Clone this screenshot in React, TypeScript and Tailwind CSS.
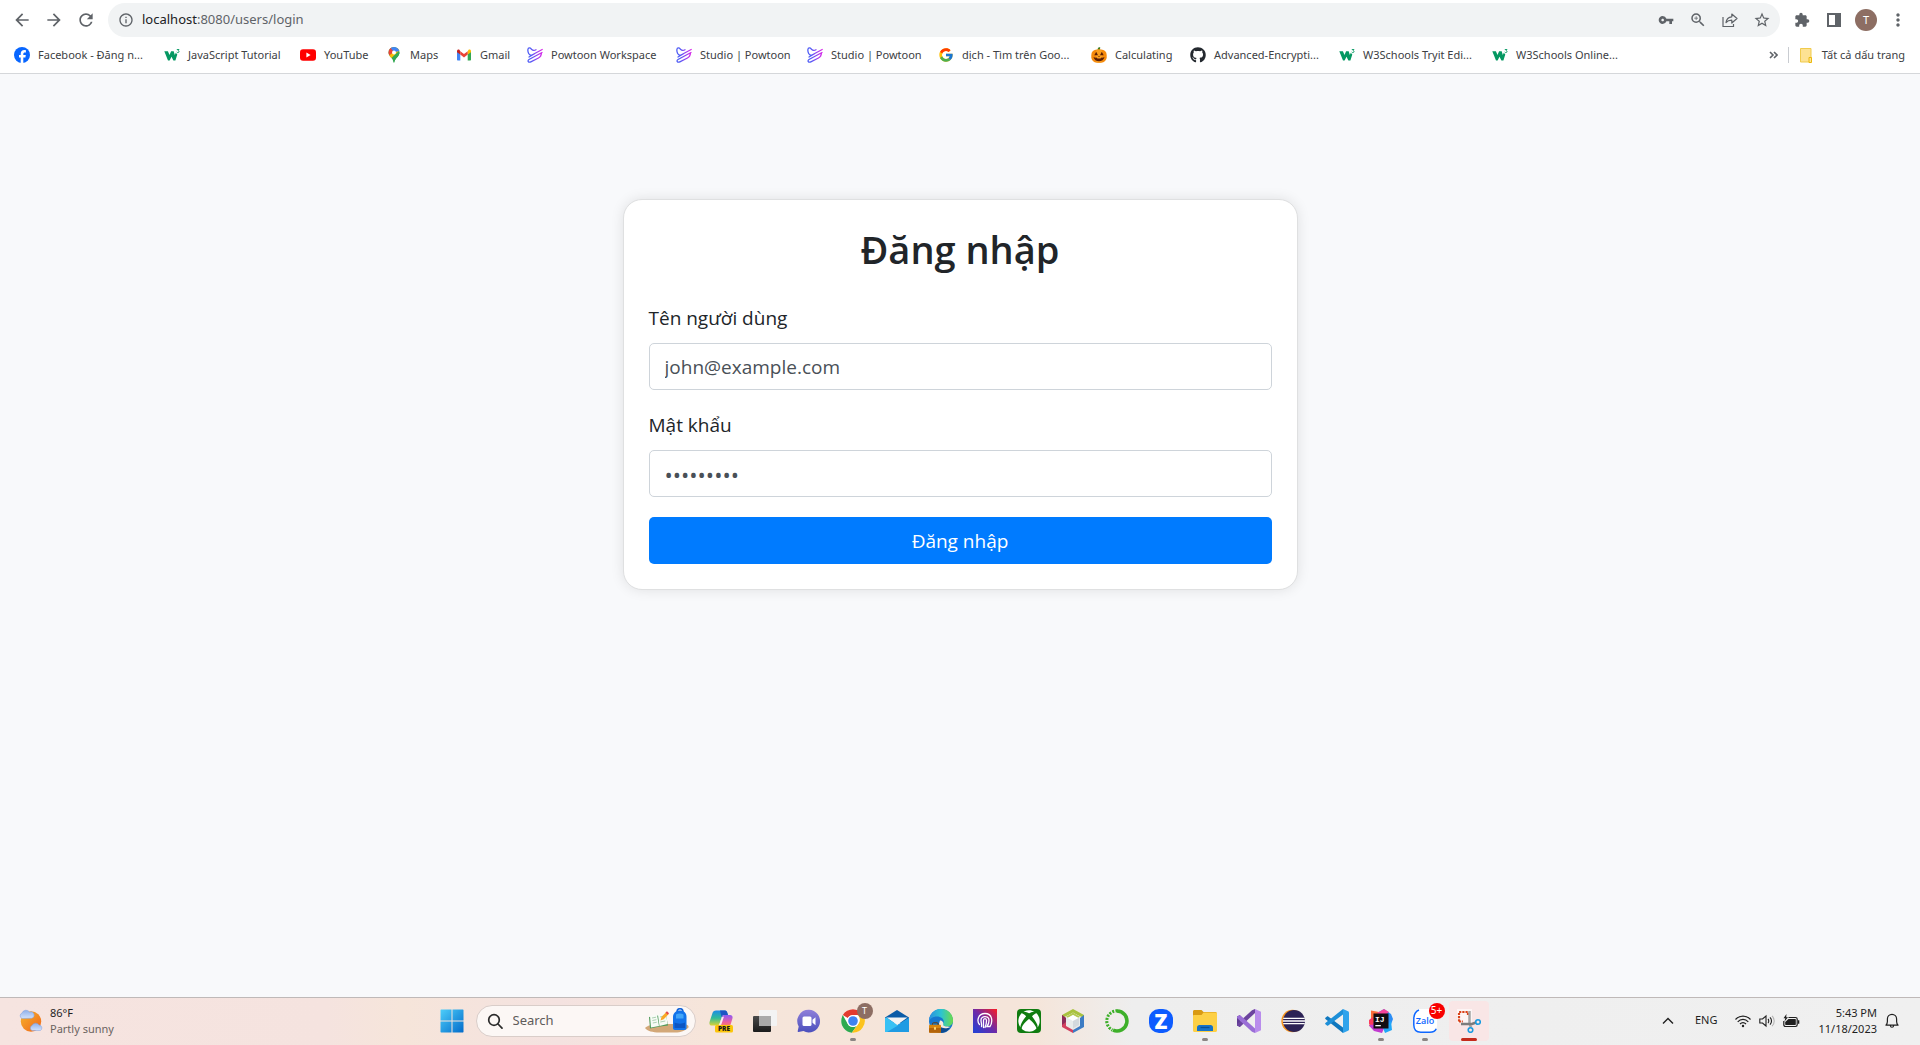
import React from 'react';
import {
  MdArrowBack,
  MdArrowForward,
  MdRefresh,
  MdInfoOutline,
  MdVpnKey,
  MdZoomIn,
  MdStarBorder,
  MdExtension,
  MdMoreVert,
} from 'react-icons/md';
import { FcGoogle } from 'react-icons/fc';
import { FaGithub, FaXbox } from 'react-icons/fa';

/* ---------- Bookmark icons ---------- */

const Facebook = () => (
  <svg viewBox="0 0 16 16" className="size-4">
    <circle cx="8" cy="8" r="8" fill="#0866ff" />
    <path d="M6.700 15.900V10.500H5V8.100h1.700V7c0-2.700 1.200-3.900 3.800-3.900.5 0 1.100.1 1.400.2v2.200h-1c-1.100 0-1.600.5-1.600 1.600v1h2.500l-.4 2.400H9.300v5.400A8 8 0 0 1 6.700 15.900z" fill="#fff" />
  </svg>
);

const W3 = () => (
  <svg viewBox="0 0 16 16" className="size-4">
    <path d="M.3 4.300h3.600l1.600 3.700 1.600-3.700h2.600l1.100 3.700 1-2.200 1.500 1.700-1.900 6h-2L7.500 9.800l-1.900 3.700H4z" fill="#059862" />
    <path d="M12.800 2.500h2.200l-1 1.200c1.400 0 1.300 1.900-.1 1.900-.6 0-1-.2-1.200-.6" fill="none" stroke="#059862" strokeWidth=".9" />
  </svg>
);

const YouTube = () => (
  <svg viewBox="0 0 16 16" className="size-4">
    <rect x="0" y="2.300" width="16" height="11.400" rx="3" fill="#f00" />
    <path d="M6.400 5.600v4.800L10.600 8z" fill="#fff" />
  </svg>
);

const Maps = () => (
  <svg viewBox="0 0 16 16" className="size-4">
    <defs>
      <clipPath id="pin">
        <path d="M8 0a5.500 5.500 0 0 0-5.500 5.500C2.500 9.500 6.700 10.500 8 16c1.300-5.500 5.500-6.500 5.500-10.500A5.500 5.500 0 0 0 8 0z" />
      </clipPath>
    </defs>
    <g clipPath="url(#pin)">
      <rect width="16" height="16" fill="#34a853" />
      <path d="M0 12 10 1l6 0L8 8.500 4.500 12z" fill="#fbbc04" />
      <path d="M0 0h6L8 5 2 9z" fill="#ea4335" />
      <path d="M4 0h12v3L8 5.500z" fill="#4285f4" />
      <path d="M16 3 7 12v4h9z" fill="#34a853" />
    </g>
    <circle cx="8" cy="5.500" r="2" fill="#fff" />
  </svg>
);

const Gmail = () => (
  <svg viewBox="0 0 16 16" className="size-4">
    <path d="M1 4.300v8.100c0 .6.400 1 1 1h2.300V7z" fill="#4285f4" />
    <path d="M15 4.300v8.100c0 .6-.4 1-1 1h-2.300V7z" fill="#34a853" />
    <path d="M11.700 4.200V7.600L15 5.200V4c0-1.400-1.500-2-2.400-1.200z" fill="#fbbc04" />
    <path d="M1 5.200l3.300 2.400V4.200L3.400 2.800C2.500 2 1 2.600 1 4z" fill="#c5221f" />
    <path d="M4.300 4.200 8 7l3.700-2.800v3.400L8 10.400 4.300 7.600z" fill="#ea4335" />
  </svg>
);

const Powtoon = () => (
  <svg viewBox="0 0 16 16" className="size-4">
    <defs>
      <linearGradient id="pow" x1="0" x2="16" y1="0" y2="0" gradientUnits="userSpaceOnUse">
        <stop offset=".25" stopColor="#4f5bf5" />
        <stop offset="1" stopColor="#e425e8" />
      </linearGradient>
    </defs>
    <path
      d="M15.200 2.500 4.500 8.200C2 8.800.6 5 .9 2.500 1.200.500 3 .5 4.500 2.200 6 3.700 7.500 3.500 9 2.700M15 5.500 2 12.500C0 13.800 1.500 16 3.800 14.800L11.500 11C13.500 10 14.300 8.500 14.500 6M7.500 6.800 2 10"
      fill="none"
      stroke="url(#pow)"
      strokeWidth="1.300"
      strokeLinecap="round"
    />
  </svg>
);

const Pumpkin = () => (
  <svg viewBox="0 0 16 16" className="size-4">
    <path d="M6.500 3.500 7 .800l2.200-.8L9 3.500z" fill="#3f7d20" />
    <rect x=".3" y="2.500" width="15.400" height="13.200" rx="5.500" fill="#f58a0c" />
    <rect x="4.800" y="2.500" width="6.400" height="13.200" rx="3" fill="#fb9e1e" />
    <path d="M3.300 8.300 5.200 4.800 7 8.300zM9 8.300l1.800-3.500 1.900 3.500zM7.200 9.900 8 8.700l.8 1.200zM2.500 10l1.800.8 1.200-.3 1 .9h3l1-.9 1.200.3 1.800-.8c-.6 2.800-2.800 4.300-5.500 4.300S3.100 12.800 2.500 10z" fill="#5b1f06" />
  </svg>
);

type Bookmark = { label: string; icon: React.ReactNode; width: string };

const bookmarks: Bookmark[] = [
  { label: 'Facebook - Đăng n...', icon: <Facebook />, width: 'w-[150px]' },
  { label: 'JavaScript Tutorial', icon: <W3 />, width: 'w-[136px]' },
  { label: 'YouTube', icon: <YouTube />, width: 'w-[86px]' },
  { label: 'Maps', icon: <Maps />, width: 'w-[70px]' },
  { label: 'Gmail', icon: <Gmail />, width: 'w-[71px]' },
  { label: 'Powtoon Workspace', icon: <Powtoon />, width: 'w-[149px]' },
  { label: 'Studio | Powtoon', icon: <Powtoon />, width: 'w-[131px]' },
  { label: 'Studio | Powtoon', icon: <Powtoon />, width: 'w-[131px]' },
  { label: 'dịch - Tìm trên Goo...', icon: <FcGoogle className="size-4" />, width: 'w-[153px]' },
  { label: 'Calculating', icon: <Pumpkin />, width: 'w-[99px]' },
  { label: 'Advanced-Encrypti...', icon: <FaGithub className="size-4 text-[#24292f]" />, width: 'w-[149px]' },
  { label: 'W3Schools Tryit Edi...', icon: <W3 />, width: 'w-[153px]' },
  { label: 'W3Schools Online...', icon: <W3 />, width: 'w-[153px]' },
];

const ShareIcon = () => (
  <svg viewBox="0 0 16 16" className="size-4" fill="none" stroke="currentColor" strokeWidth="1.200">
    <path d="M1 5v9.500h10.500V12" />
    <path d="M4 10.500C4.500 6.500 7 5 9.800 4.800V2l5.200 4.500-5.200 4.500V8.200C7.500 8.200 5.500 8.700 4 10.500z" strokeLinejoin="round" />
  </svg>
);

const SidePanelIcon = () => (
  <svg viewBox="0 0 16 16" className="size-4">
    <path d="M1 1h14v14H1zM3 3v10h6V3z" fill="currentColor" fillRule="evenodd" />
  </svg>
);

/* ---------- Taskbar icons ---------- */

const Weather = () => (
  <svg viewBox="0 0 24 24" className="size-6">
    <defs>
      <linearGradient id="sun" x1="0" y1="0" x2="1" y2="1">
        <stop offset="0" stopColor="#f6b52b" />
        <stop offset="1" stopColor="#f0641b" />
      </linearGradient>
      <linearGradient id="cloud" x1="0" y1="0" x2="0" y2="1">
        <stop offset="0" stopColor="#8fb0ea" />
        <stop offset="1" stopColor="#d3e2fb" />
      </linearGradient>
    </defs>
    <circle cx="12" cy="12.500" r="10.200" fill="url(#sun)" />
    <path d="M3 9.500a3 3 0 0 1 0-5.500 4.300 4.300 0 0 1 7.500-1 3.300 3.300 0 0 1 2.500 6.200z" fill="url(#cloud)" stroke="#7c9fe0" strokeWidth=".5" />
    <path d="M13 21.500a2.700 2.700 0 0 1 0-5 4 4 0 0 1 7-.5 3 3 0 0 1 1.500 5.500z" fill="url(#cloud)" stroke="#7c9fe0" strokeWidth=".5" />
  </svg>
);

const Windows = () => (
  <svg viewBox="0 0 24 24" className="size-6">
    <defs>
      <linearGradient id="win" x1="0" y1="0" x2="24" y2="24" gradientUnits="userSpaceOnUse">
        <stop offset="0" stopColor="#4fd0fb" />
        <stop offset="1" stopColor="#0069c9" />
      </linearGradient>
    </defs>
    <path d="M1 .5h10.500v11H.5V1zM12.500.5H23l.5.5v10.500h-11zM.5 12.500h11v11H1l-.5-.5zM12.500 12.500h11V23l-.5.5H12.500z" fill="url(#win)" />
  </svg>
);

const SearchGlyph = () => (
  <svg viewBox="0 0 16 16" className="size-4" fill="none" stroke="#2a2a2a" strokeWidth="1.700">
    <circle cx="7" cy="7" r="5.300" />
    <path d="m11 11 4 4.200" strokeLinecap="round" />
  </svg>
);

const SearchArt = () => (
  <svg viewBox="0 0 44 26" className="h-[26px] w-11">
    <path d="M0 20c2-2 7-4 14-4h26c3 1 4 2 3.500 3.500C40 23 36 24.500 30 24.500H14C8 24.500 2 23 0 20z" fill="#d3a878" />
    <path d="m4 9 9-1.500 8-1 2 11-8 1-10 2z" fill="#4f9a59" />
    <path d="m5 8 7-1.500L14 18l-8 1.500zM13 7l8-2 1.500 11-8 2z" fill="#f7fbf6" />
    <path d="m7 10 4-.8M7.400 12.500l4-.8M7.800 15l4-.8M15 9l4-1M15.300 14l5-1" stroke="#9bc4a0" strokeWidth=".8" />
    <path d="m15.500 12.500 1-3.500 5-5.200 2.200 2.200-5 5.300z" fill="#f9a825" />
    <path d="m20.500 4.500 1.500-1.300 2 2-1.300 1.500z" fill="#e5484d" />
    <path d="M32 4c0-4.500 6-4.500 6 0" fill="none" stroke="#1464d8" strokeWidth="1.500" />
    <path d="M28 9c0-4 3-6.500 7-6.500S41.500 5 41.500 9v11c0 1.300-1 2-2 2H30c-1.300 0-2-.7-2-2z" fill="#1273ea" />
    <path d="M31 6.500c2-1.500 5.500-1.500 7.500 0v4H31z" fill="#42a5f8" />
    <path d="M29.500 14.500c3 1.500 8 1.500 10.500 0V20H29.500z" fill="#0d56c2" />
  </svg>
);

const Copilot = () => (
  <svg viewBox="0 0 24 24" className="size-6">
    <defs>
      <linearGradient id="cp1" x1="0" y1="0" x2="0" y2="1">
        <stop offset="0" stopColor="#1d8be8" />
        <stop offset=".5" stopColor="#2fbb9a" />
        <stop offset="1" stopColor="#d9d435" />
      </linearGradient>
      <linearGradient id="cp2" x1="0" y1="0" x2="0" y2="1">
        <stop offset="0" stopColor="#8d5af5" />
        <stop offset=".6" stopColor="#ee5fa0" />
        <stop offset="1" stopColor="#fb8a4e" />
      </linearGradient>
    </defs>
    <path d="M7 1.500h9c1.500 0 2 1.200 2.300 2.300L19 6h-3.500c-1.500 0-2.300.8-2.800 2.300l-2 6c-.6 1.700-1.500 2.200-3 2.200H3c-2.500 0-3-1.800-2.300-4L3.500 4C4 2.500 5 1.500 7 1.500z" fill="url(#cp1)" />
    <path d="M11 1.500h5c1.500 0 2 1.200 2.300 2.300L19 6h-3.500c-1.500 0-2.500.5-3 2z" fill="#1d55c4" />
    <path d="M15.500 6H21c2.500 0 3 1.800 2.300 4l-2.500 8H9c1.300-.5 1.500-1.500 2-3l1.700-6.700C13.200 6.800 14 6 15.500 6z" fill="url(#cp2)" />
    <path d="m12.800 8.200 2.200-.7-2.700 8-2.300 1z" fill="#fbeef2" />
    <rect x="6" y="16" width="18" height="7.500" rx="1.500" fill="#fcc60a" />
    <text x="15" y="22.300" textAnchor="middle" fontSize="6.500" fontWeight="800" fontFamily="Open Sans, sans-serif" fill="#1a1a1a">PRE</text>
  </svg>
);

const TaskView = () => (
  <svg viewBox="0 0 24 24" className="size-6">
    <defs>
      <linearGradient id="tv" x1="0" y1="0" x2="0" y2="1">
        <stop offset="0" stopColor="#4a4a4a" />
        <stop offset="1" stopColor="#1b1b1b" />
      </linearGradient>
    </defs>
    <rect x="0" y="7" width="18" height="16" rx="1" fill="url(#tv)" />
    <rect x="6" y="1" width="18" height="16" rx="1" fill="#f3f3f3" />
    <rect x="6" y="7" width="12" height="10" fill="#a9a9a9" />
  </svg>
);

const Chat = () => (
  <svg viewBox="0 0 24 24" className="size-6">
    <defs>
      <linearGradient id="chat" x1="0" y1="0" x2="0" y2="1">
        <stop offset="0" stopColor="#8f7fd9" />
        <stop offset="1" stopColor="#4b50bd" />
      </linearGradient>
    </defs>
    <path d="M12 .8a11.300 11.300 0 1 1-5.500 21.300L1.500 23c-.7.100-1-.4-.8-1l1-4.500A11.300 11.300 0 0 1 12 .8z" fill="url(#chat)" />
    <rect x="5.500" y="7.500" width="9" height="9.500" rx="1.500" fill="#fff" />
    <path d="m15.500 10.800 3-2.500v8l-3-2.500z" fill="#fff" />
  </svg>
);

const Chrome = () => (
  <svg viewBox="0 0 24 24" className="size-6">
    <circle cx="12" cy="12" r="11.800" fill="#fff" />
    <path d="M1.800 6.100A11.800 11.800 0 0 1 22.200 6.100H12a6 6 0 0 0-5.200 3z" fill="#e33b2e" />
    <path d="M1.800 6.100 6.800 15c1 1.800 3 3 5.200 3 1.500 0 3-.6 4-1.500l-5.100 7.250C2.500 23-2.500 14 1.800 6.100z" fill="#2da94f" />
    <path d="M22.200 6.100A11.800 11.800 0 0 1 10.900 23.750L17.200 15a6 6 0 0 0-.7-8.900z" fill="#fcc31e" />
    <circle cx="12" cy="12" r="6" fill="#fff" />
    <circle cx="12" cy="12" r="4.800" fill="#3f83f2" />
  </svg>
);

const Mail = () => (
  <svg viewBox="0 0 24 24" className="size-6">
    <path d="M0 8.500 12 1l12 7.500V14H0z" fill="#0c5ca8" />
    <path d="M0 9v14h24V9l-12 8z" fill="#2fb2ef" />
    <path d="M24 9 0 23h24z" fill="#1f9be3" />
    <path d="m1.500 8.500 21 0L12 16z" fill="#f4f4f4" />
    <path d="m0 9 1.500-.5L13 16.500 2 23H0z" fill="#38c1f4" />
  </svg>
);

const Edge = () => (
  <svg viewBox="0 0 24 24" className="size-6">
    <defs>
      <linearGradient id="edge" x1="0" y1="0" x2="1" y2="0">
        <stop offset="0" stopColor="#2a8fe0" />
        <stop offset=".5" stopColor="#2cc3d2" />
        <stop offset="1" stopColor="#6bdc4a" />
      </linearGradient>
    </defs>
    <circle cx="12" cy="12" r="12" fill="#1576cf" />
    <path d="M0 12a12 12 0 0 1 24-.5c0 4-3 6-6.200 6-2.500 0-4-.8-4-2 0-.7 1-1.200 1-3C14.800 10 12 7.500 8 7.500c-4 0-6.800 2-8 4.500z" fill="url(#edge)" />
    <path d="M10.500 12.500c-1.500 5 4 9 11 5.600A11.500 11.500 0 0 1 12.500 24L8 18z" fill="#0f4a8f" />
    <path d="M11 11.500a3 3 0 0 1 3.300 3.500c-.5 1 .3 2.500 4 2.500l3.200.4c-6 2.800-11.500.6-11.500-3.400z" fill="#f5e8de" />
    <rect x="3.500" y="13.800" width="5.500" height="3" rx="1" fill="none" stroke="#6b3d08" strokeWidth="1" />
    <rect x="0" y="15.800" width="12" height="8" rx="1" fill="#d8860f" />
    <rect x="0" y="19" width="12" height="4.800" rx="1" fill="#b4640a" />
    <rect x="5" y="18.200" width="2" height="2.500" fill="#ffd36b" />
  </svg>
);

const Headset = () => (
  <svg viewBox="0 0 24 24" className="size-6">
    <defs>
      <linearGradient id="hs" x1="0" y1="1" x2="1" y2="0">
        <stop offset=".1" stopColor="#2b3fd0" />
        <stop offset=".5" stopColor="#6d2aa8" />
        <stop offset="1" stopColor="#fb1d23" />
      </linearGradient>
    </defs>
    <rect width="24" height="24" fill="url(#hs)" />
    <path d="M6.500 15.500c-3-3.500-1.500-11 5.500-11 7.500 0 8 8 5 13h-3c1.500-2 2-4 2-6 0-5-8-5-8-.5 0 3 1 4 .5 6.500M10.500 18.500v-7c0-2.500 3-2.500 3 0 0 3-.5 5-1.500 7" fill="none" stroke="#fff" strokeWidth="1.300" strokeLinecap="round" />
  </svg>
);

const XboxTile = () => (
  <span className="flex size-6 items-center justify-center rounded-sm bg-[#107c10]">
    <FaXbox className="size-[22px] text-white" />
  </span>
);

const NetBeans = () => (
  <svg viewBox="0 0 24 24" className="size-6">
    <path d="m12 0 11 6v3l-11-5L1 9V6z" fill="#a9c23f" />
    <path d="M1 6l4 3v8l7 4v3L1 18z" fill="#d2405f" />
    <path d="M1 6l4 3v4l-4 3z" fill="#8b2d5a" />
    <path d="m23 6-4 3v8l-7 4v3l11-6z" fill="#3d7cc4" />
    <path d="m12 3.500 7 4.300v8.400L12 20l-7-3.800V7.800z" fill="#e8ecec" />
    <path d="m12 3.500 7 4.300-2 1L12 6 7 8.800l-2-1z" fill="#b4ca52" />
    <path d="m12 6 5.500 3-5.500 3-5.500-3z" fill="#fff" />
    <path d="m12 12 6-3v7l-6 3.500z" fill="#d3d9dd" />
  </svg>
);

const Anaconda = () => (
  <svg viewBox="0 0 24 24" className="size-6" fill="none" stroke="#3eb02a">
    <path d="M12 2a10 10 0 1 1-4 19.200" strokeWidth="3.600" />
    <path d="M12.500 2A10 10 0 0 0 7.500 21" strokeWidth="3" strokeDasharray="2 1.300" />
    <path d="M12 .8A11.500 11.500 0 0 0 6.500 22" strokeWidth="1" strokeDasharray="1.500 2" />
  </svg>
);

const LetterZ = () => (
  <svg viewBox="0 0 24 24" className="size-6">
    <rect width="24" height="24" rx="10" fill="#0d5cff" />
    <text x="12" y="19.500" textAnchor="middle" fontSize="21" fontWeight="800" fontFamily="Open Sans, sans-serif" fill="#fff">Z</text>
  </svg>
);

const Folder = () => (
  <svg viewBox="0 0 24 24" className="size-6">
    <path d="M0 2.500C0 1.700.6 1 1.500 1h7l2 2H22c1 0 2 .7 2 1.700V12H0z" fill="#d99a12" />
    <path d="M0 7c0-.7.500-1 1-1h7.500l2-2.500H23c.6 0 1 .5 1 1v17c0 .8-.6 1.500-1.500 1.500h-21C.6 23 0 22.300 0 21.500z" fill="#fdd045" />
    <path d="M4 18.500C4 17 5 16 6.500 16h11c1.500 0 2.500 1 2.500 2.500V22H4z" fill="#1673c8" />
    <path d="M7.500 18.500h9" stroke="#0a4f96" strokeWidth="1.300" />
  </svg>
);

const VisualStudio = () => (
  <svg viewBox="0 0 24 24" className="size-6">
    <path d="M0 7.500 3 6v12l-3-1.500z" fill="#5f3b94" />
    <path d="M3 18 18 4V0l-3 1.200L0 15v1.500z" fill="#6c449f" />
    <path d="M3 6 18 19.500V24l-3-1.200L0 9V7.500z" fill="#9a6ed6" />
    <path d="m18 0 6 2.800v18.400L18 24z" fill="#b98cec" />
    <path d="M18 7v10l-6-5z" fill="#efefef" />
  </svg>
);

const Eclipse = () => (
  <svg viewBox="0 0 24 24" className="size-6">
    <circle cx="11.500" cy="12" r="11.200" fill="#f7941e" />
    <circle cx="13" cy="12" r="11" fill="#2c2255" />
    <path d="M2.200 9.300h21.500M1.800 12h22.200M2.200 14.700h21.500" stroke="#fff" strokeWidth="1.300" />
  </svg>
);

const VsCode = () => (
  <svg viewBox="0 0 24 24" className="size-6">
    <path d="M.4 8.800 2 7.500c.4-.3.800-.3 1.200 0L18 18.500V24L.4 10c-.4-.4-.4-.8 0-1.200z" fill="#0f77be" />
    <path d="M.4 15.200 2 16.500c.4.300.8.300 1.200 0L18 5.500V0L.4 14c-.4.400-.4.800 0 1.200z" fill="#1d8fd8" />
    <path d="m18 0 5 2.300c.6.300 1 .8 1 1.500v16.400c0 .7-.4 1.200-1 1.500L18 24z" fill="#2ea3ec" />
  </svg>
);

const IntelliJ = () => (
  <svg viewBox="0 0 24 24" className="size-6">
    <path d="m2 1.500 8 1.500L5 21l-5-4.500 2-5z" fill="#fc6d3a" />
    <path d="m10 3 5-3 7 5 2 5-3 8-6-9z" fill="#2a8df5" />
    <path d="m0 16.500 5-3 10 6-2 4.500-8-2z" fill="#c23bd0" />
    <path d="m15 0 5 3-8 6-4-5z" fill="#f7459b" />
    <path d="m14 19 8-7 1 9-7 3z" fill="#20a8f8" />
    <path d="M0 11 4 8v8l-4-1z" fill="#fd3b60" />
    <rect x="4.500" y="4.500" width="15" height="15" fill="#120d10" />
    <text x="6" y="12.500" fontSize="8" fontWeight="700" fontFamily="Liberation Mono, monospace" fill="#fff">IJ</text>
    <rect x="6.300" y="16" width="5.500" height="1.300" fill="#fff" />
  </svg>
);

const Zalo = () => (
  <svg viewBox="0 0 24 24" className="size-6">
    <rect width="24" height="24" rx="7" fill="#fff" />
    <path d="M6 1C2 2.500.8 5 .8 10v6c0 5 2 7.200 7 7.200h9c3.500 0 5.500-1 6.400-3.500" fill="none" stroke="#0d67ff" strokeWidth="1.500" />
    <text x="12" y="14.500" textAnchor="middle" fontSize="9" fontWeight="600" fontFamily="Open Sans, sans-serif" fill="#0d67ff">Zalo</text>
  </svg>
);

const Snip = () => (
  <svg viewBox="0 0 24 24" className="size-6">
    <rect width="15" height="14" x="0" y="0" fill="#fff" opacity=".6" />
    <path d="M2 12.500V3h9v3M2 12.500h4" fill="none" stroke="#d9431a" strokeWidth="2.200" strokeDasharray="2.200 1" />
    <path d="M12.500 2v12.500l1.500 4" fill="none" stroke="#a5a5a5" strokeWidth="2.500" />
    <path d="M4 15h11l4-1.500" fill="none" stroke="#7c7c7c" strokeWidth="2.500" />
    <circle cx="21" cy="13" r="2.300" fill="none" stroke="#199be0" strokeWidth="1.600" />
    <circle cx="13.500" cy="21" r="2.300" fill="none" stroke="#199be0" strokeWidth="1.600" />
  </svg>
);

type TaskbarApp = { name: string; icon: React.ReactNode; state?: 'running' | 'active'; badge?: React.ReactNode };

const apps: TaskbarApp[] = [
  { name: 'Copilot', icon: <Copilot /> },
  { name: 'Task view', icon: <TaskView /> },
  { name: 'Chat', icon: <Chat /> },
  {
    name: 'Chrome',
    icon: <Chrome />,
    state: 'running',
    badge: (
      <span className="absolute top-0 -right-1 flex size-4 items-center justify-center rounded-full bg-[#8d6e63] text-[9px] text-white">T</span>
    ),
  },
  { name: 'Mail', icon: <Mail /> },
  { name: 'Edge', icon: <Edge /> },
  { name: 'Audio', icon: <Headset /> },
  { name: 'Xbox', icon: <XboxTile /> },
  { name: 'NetBeans', icon: <NetBeans /> },
  { name: 'Anaconda', icon: <Anaconda /> },
  { name: 'Zoom', icon: <LetterZ /> },
  { name: 'Explorer', icon: <Folder />, state: 'running' },
  { name: 'Visual Studio', icon: <VisualStudio /> },
  { name: 'Eclipse', icon: <Eclipse /> },
  { name: 'VS Code', icon: <VsCode /> },
  { name: 'IntelliJ IDEA', icon: <IntelliJ />, state: 'running' },
  {
    name: 'Zalo',
    icon: <Zalo />,
    state: 'running',
    badge: (
      <span className="absolute top-0 -right-1 flex size-4 items-center justify-center rounded-full bg-[#f80000] text-[10px] text-white">5+</span>
    ),
  },
  { name: 'Snipping Tool', icon: <Snip />, state: 'active' },
];

const TaskButton = ({ app }: { app: TaskbarApp }) => (
  <button
    type="button"
    aria-label={app.name}
    className={`relative flex size-10 items-center justify-center rounded ${app.state === 'active' ? 'bg-[#f9e6e6]' : ''}`}
  >
    {app.icon}
    {app.badge && <span className="absolute inset-y-0.5 inset-x-1">{app.badge}</span>}
    {app.state === 'running' && <span className="absolute bottom-0 h-[3px] w-1.5 rounded-full bg-[#8a8583]" />}
    {app.state === 'active' && <span className="absolute bottom-0 h-[3px] w-4 rounded-full bg-[#c42b1c]" />}
  </button>
);

/* ---------- Page sections ---------- */

const toolButton = 'flex size-8 items-center justify-center';

const BrowserHeader = () => (
  <header className="border-b border-[#d5d7da] bg-white pt-[3px] font-['Noto_Sans',sans-serif] text-[#5f6368]">
    <div className="flex items-center pl-1.5">
      <button type="button" aria-label="Back" className={toolButton}><MdArrowBack className="size-5" /></button>
      <button type="button" aria-label="Forward" className={toolButton}><MdArrowForward className="size-5" /></button>
      <button type="button" aria-label="Reload" className={toolButton}><MdRefresh className="size-5" /></button>
      <div className="ml-1.5 flex h-[34px] flex-1 items-center rounded-full bg-[#f1f3f4] pl-2.5 pr-0.5">
        <MdInfoOutline className="size-4" />
        <div className="flex-1 pl-2 text-[13px]">
          <span className="text-[#202124]">localhost</span>:8080/users/login
        </div>
        <button type="button" aria-label="Passwords" className={toolButton}><MdVpnKey className="size-4" /></button>
        <button type="button" aria-label="Zoom" className={toolButton}><MdZoomIn className="size-[18px]" /></button>
        <button type="button" aria-label="Share" className={toolButton}><ShareIcon /></button>
        <button type="button" aria-label="Bookmark" className={toolButton}><MdStarBorder className="size-[18px]" /></button>
      </div>
      <div className="flex pl-1.5 pr-1.5">
        <button type="button" aria-label="Extensions" className={toolButton}><MdExtension className="size-4" /></button>
        <button type="button" aria-label="Side panel" className={toolButton}><SidePanelIcon /></button>
        <button type="button" aria-label="Profile" className={toolButton}>
          <span className="flex size-[22px] items-center justify-center rounded-full bg-[#8d6e63] text-[11px] text-white">T</span>
        </button>
        <button type="button" aria-label="Menu" className={toolButton}><MdMoreVert className="size-5" /></button>
      </div>
    </div>
    <nav className="flex h-9 items-center whitespace-nowrap pl-3.5 pr-[15px] text-[11px] text-[#3c4043]">
      {bookmarks.map((b, i) => (
        <a key={i} href="#" className={`flex shrink-0 items-center gap-2 ${b.width}`}>
          {b.icon}
          {b.label}
        </a>
      ))}
      <div className="ml-auto flex items-center">
        <button type="button" aria-label="More bookmarks" className="pr-2.5 text-[#5f6368]">
          <svg viewBox="0 0 9 8" className="h-2 w-[9px]" fill="none" stroke="currentColor" strokeWidth="1.600">
            <path d="m1 1 3 3-3 3M5 1l3 3-3 3" />
          </svg>
        </button>
        <span className="h-4 w-px bg-[#c9ccd1]" />
        <a href="#" className="flex items-center gap-2.5 pl-[11px]">
          <svg viewBox="0 0 12 15" className="h-[15px] w-3">
            <path d="M.5.500h10.500v13.500H.500z" fill="#fde293" stroke="#f0cb4c" />
            <path d="M9 9.500h2.500v5H9z" fill="#fde293" stroke="#eab90e" />
          </svg>
          Tất cả dấu trang
        </a>
      </div>
    </nav>
  </header>
);

const field =
  'mt-2.5 h-[47px] w-full rounded-[5px] border border-[#ced4da] bg-white px-[15px] text-[#495057] outline-none';

const LoginCard = () => (
  <form className="w-full max-w-[675px] rounded-[19px] border border-[#dfe0e1] bg-white p-[25px] text-[19px] leading-[30px] text-[#212529] shadow-[0_0_13px_rgba(0,0,0,0.1)]">
    <h1 className="mb-[30px] text-center text-[38px] leading-[48px] font-semibold">Đăng nhập</h1>
    <div className="mb-5">
      <label htmlFor="username" className="block">Tên người dùng</label>
      <input id="username" type="text" defaultValue="john@example.com" className={field} />
    </div>
    <div className="mb-5">
      <label htmlFor="password" className="block">Mật khẩu</label>
      <input id="password" type="password" defaultValue="password1" className={`${field} text-[22px]`} />
    </div>
    <button type="button" className="block h-[47px] w-full rounded-[5px] bg-[#007bff] text-white">Đăng nhập</button>
  </form>
);

const Tray = () => (
  <div className="flex flex-1 items-center justify-end pr-[21px] text-[11px] text-[#1f1f1f]">
    <svg viewBox="0 0 12 12" className="mr-[21px] size-3" fill="none" stroke="currentColor" strokeWidth="1.400">
      <path d="m1 8.500 5-5 5 5" />
    </svg>
    <span className="mr-[18px]">ENG</span>
    <svg viewBox="0 0 16 16" className="mr-2 size-4" fill="none" stroke="currentColor" strokeWidth="1.200">
      <path d="M.5 6.500c4-4.600 11-4.600 15 0M2.700 8.800c3-3.300 7.600-3.300 10.600 0M5 11c1.800-1.900 4.200-1.900 6 0" />
      <circle cx="8" cy="13" r="1.200" fill="currentColor" stroke="none" />
    </svg>
    <svg viewBox="0 0 16 16" className="mr-2 size-4" fill="none" stroke="currentColor" strokeWidth="1.100">
      <path d="M.8 6v4h2.700L7 13V3L3.500 6zM9 6c1 1 1 3 0 4M11 4.300c2 2 2 5.400 0 7.400" />
      <path d="M13 2.800c3 3 3 7.400 0 10.400" stroke="#b5b5b5" />
    </svg>
    <svg viewBox="0 0 17 14" className="mr-[18px] h-3.5 w-[17px]">
      <path d="M5.500 3.500h7c1 0 1.700.7 1.700 1.700v5.600c0 1-.7 1.700-1.700 1.700h-10c-1 0-1.700-.7-1.700-1.700V7" fill="none" stroke="currentColor" strokeWidth="1.200" />
      <path d="M5.500 5h6.800c.3 0 .5.200.5.500v5c0 .3-.2.500-.5.500H2.700c-.3 0-.5-.2-.5-.5V8zM15 6.300h1.300v3.400H15zM3.500 0 .5 4.200h1.800L1.500 7.500l3.500-4.200H3.200z" fill="currentColor" />
    </svg>
    <div className="mr-2 text-right leading-4">
      <div>5:43 PM</div>
      <div>11/18/2023</div>
    </div>
    <svg viewBox="0 0 14 16" className="h-4 w-3.5" fill="none" stroke="currentColor" strokeWidth="1.200">
      <path d="M1 12.200c1-1.200 1.400-2.200 1.400-3.700V6a4.600 4.600 0 0 1 9.200 0v2.500c0 1.500.4 2.500 1.400 3.700zM5.300 12.500c.3 2.300 3.100 2.300 3.400 0" strokeLinejoin="round" />
    </svg>
  </div>
);

const Taskbar = () => (
  <footer className="flex h-12 items-center border-t border-[#bfb9b8] bg-[linear-gradient(90deg,#f6e4e0_0%,#f5e3df_17%,#f6e5da_21%,#f4e2e0_29%,#f6e5da_37%,#f5e5da_54%,#eeeeee_59%,#f0f0f0_100%)] pb-0.5 font-['Noto_Sans',sans-serif]">
    <div className="flex flex-1 items-center gap-[7px] pl-[19px]">
      <Weather />
      <div className="text-[11px] leading-4">
        <div className="text-[#1f1f1f]">86°F</div>
        <div className="text-[#6b6360]">Partly sunny</div>
      </div>
    </div>
    <div className="flex items-center pl-2.5">
      <button type="button" aria-label="Start"><Windows /></button>
      <label className="mx-3 flex h-8 w-[220px] items-center rounded-full border border-[#d9cdc9] bg-[#fcf7f5] pr-1.5 pl-2.5">
        <SearchGlyph />
        <input
          type="text"
          placeholder="Search"
          aria-label="Search"
          className="ml-2.5 w-0 flex-1 bg-transparent text-[13px] outline-none placeholder:text-[#5f5c5b]"
        />
        <SearchArt />
      </label>
      <div className="-ml-[7px] flex gap-1">
        {apps.map((a) => (
          <TaskButton key={a.name} app={a} />
        ))}
      </div>
    </div>
    <Tray />
  </footer>
);

export default function App() {
  return (
    <div className="flex min-h-screen flex-col bg-[#f8f9fb] font-['Open_Sans','Noto_Sans',sans-serif]">
      <BrowserHeader />
      <main className="flex flex-1 items-start justify-center px-4 pt-[125px]">
        <LoginCard />
      </main>
      <Taskbar />
    </div>
  );
}
